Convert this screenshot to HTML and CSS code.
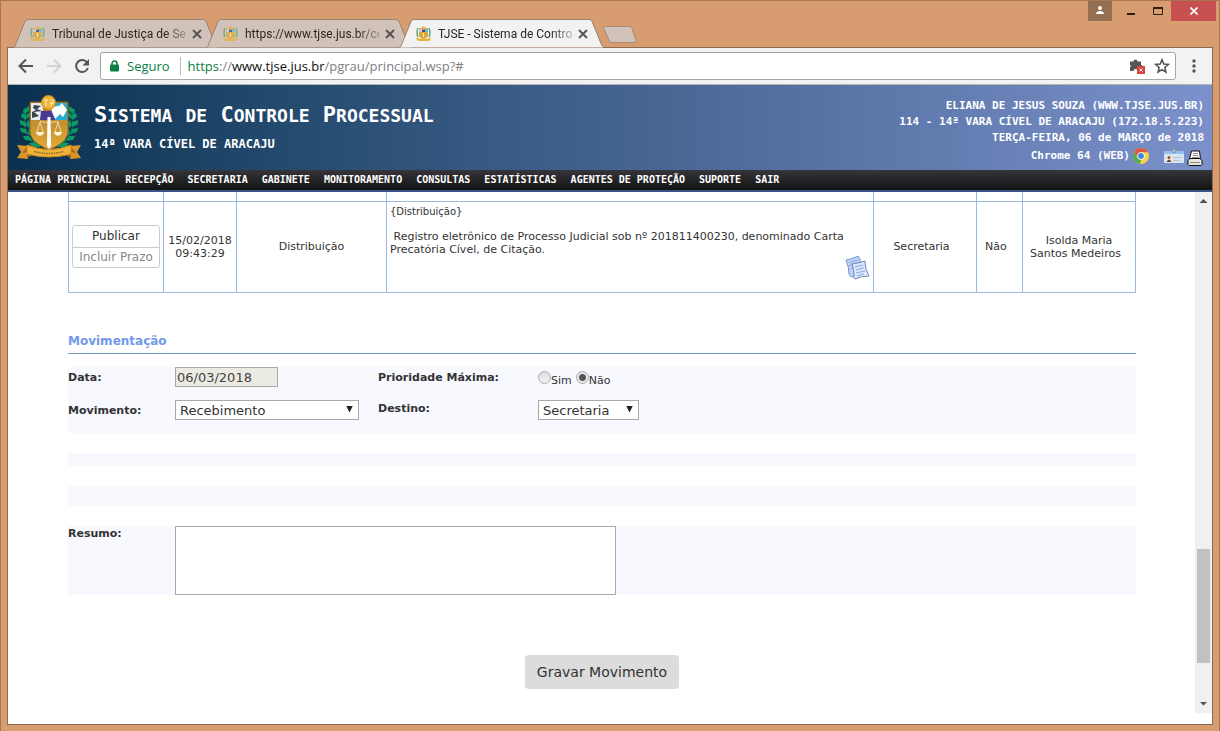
FILE: index.html
```html
<!DOCTYPE html>
<html lang="pt-BR">
<head>
<meta charset="utf-8">
<title>TJSE - Sistema de Controle Processual</title>
<link rel="stylesheet" href="styles.css">
</head>
<body>
<svg class="defs" aria-hidden="true">
  <defs>
    <linearGradient id="gold" x1="0" y1="0" x2="0" y2="1"><stop offset="0" stop-color="#a97b2c"/><stop offset="1" stop-color="#e3ad38"/></linearGradient>
    <symbol id="crest" viewBox="0 0 66 64">
      <g fill="none" stroke="#12694d"><path d="M13 12C4 28 9 44 24 53M52 12c9 16 4 32-11 41"/></g>
      <g fill="#0c9a63">
        <path d="M13 11l-6 4 1 4 5-3zM6 18l5 2-1 5-5-3zM14 17l-4 3 1 4 4-4zM4 25l6 2v5l-6-3zM12 25l-2 5 3 3 2-5zM4 33l6 1 2 5-7-2zM13 33l-1 6 4 3 1-6zM7 41l6 0 4 5-8-1zM17 40l0 6 5 3-1-6zM13 48l7-1 5 5-9 0z"/>
        <path d="M53 11l6 4-1 4-5-3zM60 18l-5 2 1 5 5-3zM52 17l4 3-1 4-4-4zM62 25l-6 2v5l6-3zM54 25l2 5-3 3-2-5zM62 33l-6 1-2 5 7-2zM53 33l1 6-4 3-1-6zM59 41l-6 0-4 5 8-1zM49 40l0 6-5 3 1-6zM53 48l-7-1-5 5 9 0z"/>
      </g>
      <path d="M14 7h38v29c0 9-8 14-19 19-11-5-19-10-19-19z" fill="url(#gold)" stroke="#8b6420"/>
      <path d="M15 8h12v17H15z" fill="#e8edf2"/>
      <path d="M18 10l7 1-4 3 5 2-8 1 5 4-7 2v-6l4-2-3-2z" fill="#3c424c"/>
      <path d="M25 16h15v9H24z" fill="#493b91"/>
      <path d="M39 8h12v17H39z" fill="#25acd8"/>
      <path d="M35 12l8-1 3-3 5 7-4 7-3-3-5 5-3-7z" fill="#fff"/>
      <circle cx="32.500" cy="7.500" r="7" fill="#efb43a" stroke="#c98a21"/>
      <path d="M28 5h4M30 5v6M34 5c5-1 5 3 1 3v3M34 8h4" stroke="#fff2ba" fill="none"/>
      <path d="M31.500 22h3l.500 29-2 3-2-3z" fill="#fff"/>
      <path d="M24 26c4 2 14 2 18 0M24 27l-3 10M24 27l3 10M42 27l-3 10M42 27l3 10" fill="none" stroke="#fff5d5" stroke-width=".7"/>
      <path d="M20 37h8c-1 5-7 5-8 0zM38 37h8c-1 5-7 5-8 0z" fill="#fff8df"/>
      <path d="M1 50l11 1v13L1 63l4-6zM65 50l-11 1v13l11-1-4-6z" fill="#d8952a"/>
      <path d="M11 52l-5 6 5-1v6l7-4z" fill="#a76520"/>
      <path d="M55 52l5 6-5-1v6l-7-4z" fill="#a76520"/>
      <path d="M11 50q22 9 44 0v9q-22 6-44 0z" fill="#f0b338" stroke="#cd8b23"/>
      <path d="M18 56.500q15 4 30 0" fill="none" stroke="#8a6425" stroke-width="1.500" stroke-dasharray="1.500 1"/>
    </symbol>
    <symbol id="favicon" viewBox="0 0 15 15">
      <path d="M2 2Q0 6 2 11M13 2q2 4 0 9" fill="none" stroke="#57a98a" stroke-width="1.500"/>
      <path d="M3 2h9v7q0 3-4.500 4Q3 12 3 9z" fill="#dda93a"/>
      <path d="M3.500 3h3v3h-3z" fill="#c9d2dc"/>
      <path d="M6 3.500h3V6H6z" fill="#4c4a86"/>
      <path d="M9 3h2.500v3H9z" fill="#5bbcdc"/>
      <circle cx="7.500" cy="2" r="1.800" fill="#e5b24b"/>
      <path d="M7 7h1v4H7z" fill="#fbeec5"/>
      <path d="M0 11.500q7.500 3 15 0l-1 3q-6.500 1-13 0z" fill="#e8b136"/>
    </symbol>
    <symbol id="cross" viewBox="0 0 10 10"><path d="M1 1l8 8M9 1L1 9" stroke="currentColor" stroke-width="2"/></symbol>
    <symbol id="tab-shape" viewBox="0 0 205 29" preserveAspectRatio="none"><path d="M0 28.500c2 0 2-2 3-4L12 2.500Q13 .500 15 .500H190Q192 .500 193 2.500L202 24.500C203 27 204 28.500 205 28.500" fill="currentColor" stroke="#99826f"/></symbol>
  </defs>
</svg>

<div class="window">
  <header class="titlebar">
    <div class="tabs">
      <div class="tab">
        <svg class="tab-bg"><use href="#tab-shape"/></svg>
        <svg class="favicon"><use href="#favicon"/></svg>
        <span class="tab-title">Tribunal de Justiça de Se</span>
        <button class="tab-close" aria-label="Fechar guia"><svg><use href="#cross"/></svg></button>
      </div>
      <div class="tab">
        <svg class="tab-bg"><use href="#tab-shape"/></svg>
        <svg class="favicon"><use href="#favicon"/></svg>
        <span class="tab-title">https://www.tjse.jus.br/cc</span>
        <button class="tab-close" aria-label="Fechar guia"><svg><use href="#cross"/></svg></button>
      </div>
      <div class="tab active">
        <svg class="tab-bg"><use href="#tab-shape"/></svg>
        <svg class="favicon"><use href="#favicon"/></svg>
        <span class="tab-title">TJSE - Sistema de Contro</span>
        <button class="tab-close" aria-label="Fechar guia"><svg><use href="#cross"/></svg></button>
      </div>
      <button class="new-tab" aria-label="Nova guia"><svg viewBox="0 0 34 18"><path d="M2.500.500H26Q28 .500 29 2.500L33 14.500Q33.500 16.500 31 16.500H9Q7 16.500 6 14.500L1 2.500Q.500.500 2.500.500z" fill="#d1c3b9" stroke="#a58973"/></svg></button>
    </div>
    <div class="window-controls">
      <button class="profile" aria-label="Perfil"><svg width="24" height="20"><circle cx="12" cy="7" r="2" fill="#fff"/><path d="M8 13c0-4 8-4 8 0z" fill="#fff"/></svg></button>
      <button class="minimize" aria-label="Minimizar"><svg width="24" height="20"><path d="M4 13h8" stroke="#2d1d12" stroke-width="2"/></svg></button>
      <button class="maximize" aria-label="Maximizar"><svg width="24" height="20"><path d="M6.500 7h9v6.500h-9z" fill="none" stroke="#2d1d12"/><path d="M6 7h10" stroke="#2d1d12" stroke-width="2"/></svg></button>
      <button class="close" aria-label="Fechar"><svg width="8" height="8"><path d="M.500.500l7 7M7.500.500l-7 7" stroke="#fff" stroke-width="1.700"/></svg></button>
    </div>
  </header>

  <div class="browser">
    <div class="toolbar">
      <button aria-label="Voltar"><svg viewBox="0 0 16 16"><path d="M15 8H2M8 1.500L1.500 8 8 14.500" fill="none" stroke="#555" stroke-width="2"/></svg></button>
      <button aria-label="Avançar"><svg viewBox="0 0 16 16"><path d="M1 8h13M8 1.500L14.500 8 8 14.500" fill="none" stroke="#d2d2d2" stroke-width="2"/></svg></button>
      <button aria-label="Recarregar"><svg viewBox="0 0 16 16"><path d="M13 4.500A6 6 0 1 0 13.800 10" fill="none" stroke="#555" stroke-width="2"/><path d="M15 1v6.500H8.500z" fill="#555"/></svg></button>
      <div class="omnibox">
        <svg class="lock" viewBox="0 0 9 12"><path d="M2 5V3.500a2.500 2.500 0 0 1 5 0V5" fill="none" stroke="#0b8043" stroke-width="1.500"/><rect y="4.500" width="9" height="7" rx="1" fill="#0b8043"/></svg>
        <span class="secure">Seguro</span>
        <span class="url"><span class="scheme">https</span>://<b>www.tjse.jus.br</b>/pgrau/principal.wsp?#</span>
        <svg class="ext" viewBox="0 0 16 16"><path d="M1 3.500h3.500a2 2 0 1 1 4 0H12V7a2 2 0 1 1 0 4v2H8.500a2 2 0 0 0-4 0H1V9.500a2 2 0 0 0 0-3z" fill="#555"/><path d="M8 8h8v8H8z" fill="#d9453c"/><path d="M10.500 10.500l3 3M13.500 10.500l-3 3" stroke="#fff"/></svg>
        <svg class="star" viewBox="0 0 16 16"><path d="M8 1.800l1.800 4.300 4.500.400-3.400 3 1 4.500L8 11.600 4.100 14l1-4.500-3.400-3 4.500-.400z" fill="none" stroke="#555" stroke-width="1.600"/></svg>
      </div>
      <button class="menu" aria-label="Menu"><svg viewBox="0 0 4 14"><g fill="#555"><circle cx="2" cy="2" r="1.700"/><circle cx="2" cy="7" r="1.700"/><circle cx="2" cy="12" r="1.700"/></g></svg></button>
    </div>

    <div class="page">
      <div class="banner">
        <svg class="logo"><use href="#crest"/></svg>
        <div class="heading">
          <h1><span>S</span>ISTEMA<span> </span>DE<span> C</span>ONTROLE<span> P</span>ROCESSUAL</h1>
          <p>14ª VARA CÍVEL DE ARACAJU</p>
        </div>
        <div class="session">
          <p>ELIANA DE JESUS SOUZA (WWW.TJSE.JUS.BR)</p>
          <p>114 - 14ª VARA CÍVEL DE ARACAJU (172.18.5.223)</p>
          <p>TERÇA-FEIRA, 06 de MARÇO de 2018</p>
          <div class="client">
            <span>Chrome 64 (WEB)</span>
            <svg class="chrome" viewBox="0 0 16 16"><circle cx="8" cy="8" r="8" fill="#fbd04b"/><path d="M1 4.100A8 8 0 0 1 15 4.200H8L5 10z" fill="#df5548"/><path d="M1 4.100l3.700 6L8 12l-1 4A8 8 0 0 1 1 4.100z" fill="#55aa57"/><circle cx="8" cy="8" r="3.800" fill="#fff"/><circle cx="8" cy="8" r="2.900" fill="#3589dc"/></svg>
            <svg class="card" viewBox="0 0 20 16"><rect y="3" width="20" height="12" rx="1" fill="#d7e5f2"/><path d="M0 3h20v3H0z" fill="#8fc0ee"/><path d="M8.500 1.500h3v3h-3z" fill="#b6c1ca" stroke="#8797a3"/><path d="M2 8h6v6H2z" fill="#f0e9df"/><circle cx="5" cy="9.500" r="1.500" fill="#9b512b"/><path d="M2.500 14q2.500-5 5 0z" fill="#5b4540"/><path d="M9 9.500h9M9 12.500h7" stroke="#b9c4ce"/></svg>
            <svg class="printer" viewBox="0 0 16 16"><path d="M4.500 1h8l1 8h-11z" fill="#fff" stroke="#111"/><path d="M6 3.500h5M6 5.500h5M5 7.500h7" stroke="#888"/><path d="M3 8.500h10l2 2v4l-1 1H2l-1-1v-4z" fill="#e8e6dc" stroke="#111"/><path d="M3 12.500h10" stroke="#888"/></svg>
          </div>
        </div>
      </div>
      <nav class="nav">
        <a href="#">PÁGINA PRINCIPAL</a><a href="#">RECEPÇÃO</a><a href="#">SECRETARIA</a><a href="#">GABINETE</a><a href="#">MONITORAMENTO</a><a href="#">CONSULTAS</a><a href="#">ESTATÍSTICAS</a><a href="#">AGENTES DE PROTEÇÃO</a><a href="#">SUPORTE</a><a href="#">SAIR</a>
      </nav>

      <div class="viewport">
        <main class="content">
          <table class="moves">
            <colgroup><col class="c-act"><col class="c-date"><col class="c-type"><col><col class="c-dest"><col class="c-flag"><col class="c-user"></colgroup>
            <tbody>
              <tr class="stub"><td></td><td></td><td></td><td></td><td></td><td></td><td></td></tr>
              <tr>
                <td><div class="actions"><button>Publicar</button><button disabled>Incluir Prazo</button></div></td>
                <td>15/02/2018<br>09:43:29</td>
                <td>Distribuição</td>
                <td class="detail">
                  <p class="tag">{Distribuição}</p>
                  <p class="body">&nbsp;Registro eletrônico de Processo Judicial sob nº 201811400230, denominado Carta<br>Precatória Cível, de Citação.</p>
                  <svg class="docs" viewBox="0 0 26 26"><path d="M2 5q6-1 12-4l2 3q0 8 3 15-7-2-11 3-1 1-3-3 0-7-3-14z" fill="#bed2f5" stroke="#7a96d2"/><path d="M5 8l8-3M5 11l8-3M6 14l5-2" stroke="#8ca8df"/><path d="M8 9q7-1 13-3 0 9 4 15-8 0-14 3-2-1-1-4 0-6-2-11z" fill="#dce9fc" stroke="#7088b8"/><path d="M11 12l8-2M12 15l8-2M12 18l9-2M13 21l7-2" stroke="#89a8dd"/></svg>
                </td>
                <td>Secretaria&nbsp;&nbsp;</td>
                <td class="flag">Não</td>
                <td>Isolda Maria<br>Santos Medeiros&nbsp;&nbsp;</td>
              </tr>
            </tbody>
          </table>

          <h2>Movimentação</h2>
          <form class="form">
            <div class="row">
              <label for="data">Data:</label>
              <div><input id="data" class="date" type="text" value="06/03/2018" readonly></div>
              <span class="label" id="prio">Prioridade Máxima:</span>
              <div class="radios" role="radiogroup" aria-labelledby="prio">
                <label><input type="radio" name="prioridade">Sim</label>
                <label><input type="radio" name="prioridade" checked>Não</label>
              </div>
            </div>
            <div class="row second">
              <label for="movimento">Movimento:</label>
              <div class="select wide"><select id="movimento"><option>Recebimento</option></select></div>
              <label for="destino">Destino:</label>
              <div class="select narrow"><select id="destino"><option>Secretaria</option></select></div>
            </div>
            <div class="band short"></div>
            <div class="band"></div>
            <div class="row summary">
              <label for="resumo">Resumo:</label>
              <textarea id="resumo"></textarea>
            </div>
            <button class="save" type="button">Gravar Movimento</button>
          </form>
        </main>
        <div class="scrollbar">
          <i class="arrow up"></i>
          <i class="thumb"></i>
          <i class="arrow down"></i>
        </div>
      </div>
    </div>
  </div>
</div>
</body>
</html>
```
FILE: styles.css
```css
* { box-sizing: border-box; }
body { margin: 0; font: 11px/13px Verdana, "DejaVu Sans", sans-serif; color: #333; }
h1, h2, p { margin: 0; }
svg { display: block; }
button { padding: 0; border: 0; background: none; font: inherit; color: inherit; }
.defs { position: absolute; width: 0; height: 0; }

.window { min-height: 100vh; display: flex; flex-direction: column; padding: 0 6px 6px; background: #d79d70; border: 1px solid #a9774f; }

/* Title bar and tabs */
.titlebar { display: flex; justify-content: space-between; height: 46px; margin-right: -3px; }
.tabs { display: flex; align-items: flex-end; padding-left: 6px; margin-bottom: -1px; }
.tab { position: relative; display: flex; align-items: center; width: 205px; height: 29px; padding: 0 16px 0 17px; margin-right: -12px; color: #d1c3b9; }
.tab.active { color: #f2f2f2; z-index: 1; }
.tab-bg { position: absolute; inset: 0; width: 100%; height: 100%; }
.favicon { position: relative; width: 15px; height: 15px; flex: none; opacity: .8; }
.active .favicon { opacity: 1; }
.tab-title { position: relative; flex: 1; min-width: 0; margin: 0 6px 0 7px; white-space: nowrap; font: 12px/16px Roboto, sans-serif; color: #2c2623; -webkit-mask-image: linear-gradient(90deg, #000 84%, transparent 106%); mask-image: linear-gradient(90deg, #000 84%, transparent 106%); }
.tab-close { position: relative; color: #555; }
.tab-close svg { width: 10px; height: 10px; }
.new-tab { align-self: flex-end; margin: 0 0 4px 11px; }
.new-tab svg { width: 34px; height: 18px; }
.window-controls { display: flex; align-items: flex-start; }
.window-controls button { height: 20px; }
.profile { background: #946f51; }
.minimize { margin-left: 11px; }
.window-controls .close { display: grid; place-items: center; width: 45px; background: #c75050; }

.browser { flex: 1; display: flex; flex-direction: column; background: #fff; border: 1px solid #8d6b50; }

/* Toolbar */
.toolbar { display: flex; align-items: center; gap: 12px; height: 37px; padding: 0 10px; background: #f2f2f2; border-bottom: 1px solid #b4b4b4; }
.toolbar button svg { width: 16px; height: 16px; }
.toolbar .menu svg { width: 4px; height: 14px; }
.toolbar .menu { padding: 0 6px 0 4px; }
.omnibox { flex: 1; display: flex; align-items: center; height: 28px; margin-left: -2px; padding: 0 5px 0 9px; background: #fff; border: 1px solid #a6a6a6; border-radius: 3px; font: 13px/18px "Open Sans", sans-serif; }
.lock { width: 9px; height: 12px; margin-right: 8px; }
.secure { padding-right: 10px; border-right: 1px solid #bbb; color: #0b8043; }
.url { flex: 1; padding-left: 7px; color: #808080; }
.url b { font-weight: 400; color: #111; }
.scheme { color: #0b8043; }
.ext { width: 16px; height: 16px; margin-right: 9px; }
.star { width: 16px; height: 16px; }

/* Application banner */
.page { flex: 1; display: flex; flex-direction: column; }
.banner { display: flex; height: 85px; padding: 10px 8px 0; background: linear-gradient(90deg, #0a304f, #244a6e 23%, #4a6896 56%, #7c91cb); color: #fff; font-family: Consolas, "DejaVu Sans Mono", monospace; font-weight: 700; }
.logo { width: 66px; height: 64px; }
.heading { flex: 1; margin-left: 12px; }
.heading h1 { font-size: 18px; line-height: 24px; padding-top: 8px; white-space: pre; }
.heading h1 span { font-size: 22px; }
.heading p { font-size: 12px; line-height: 16px; margin-top: 8px; }
.session { font-size: 11px; line-height: 16px; text-align: right; padding-top: 3px; }
.client { display: flex; justify-content: flex-end; align-items: center; height: 20px; }
.chrome { width: 16px; height: 16px; margin-left: 3px; }
.card { width: 20px; height: 16px; margin-left: 15px; }
.printer { width: 16px; height: 16px; margin: 3px 1px 0 3px; }
.nav { display: flex; gap: 14px; height: 22px; padding: 0 7px; background: linear-gradient(#35353b, #131313); border-bottom: 2px solid #3c5289; font: 700 10px/20px Consolas, "DejaVu Sans Mono", monospace; }
.nav a { color: #fff; text-decoration: none; }

/* Scrolled page area */
.viewport { flex: 1; display: flex; padding-bottom: 11px; }
.content { flex: 1; padding: 0 59px 24px 60px; }
.moves { width: 100%; border-collapse: collapse; table-layout: fixed; }
.moves td { border: 1px solid #9abbdf; padding: 0 3px; text-align: center; height: 91px; }
.moves .stub td { border-top: 0; height: 9px; }
.c-act { width: 95px; }
.c-date { width: 73px; }
.c-type { width: 150px; }
.c-dest { width: 103px; }
.c-flag { width: 46px; }
.c-user { width: 113px; }
.moves td.detail { text-align: left; vertical-align: top; }
.moves td.flag { text-align: left; padding-left: 8px; }
.tag { margin: 3px 0 12px; font-size: 10px; }
.docs { width: 26px; height: 26px; margin: -1px 0 0 auto; }
.actions { display: flex; flex-direction: column; border: 1px solid #ccc; border-radius: 3px; overflow: hidden; font-size: 12px; }
.actions button { height: 21px; }
.actions button + button { height: 20px; border-top: 1px solid #ccc; color: #888; }

h2 { margin-top: 41px; padding-bottom: 5px; border-bottom: 1px solid #6f9dc4; font-size: 12px; line-height: 14px; color: #7098ec; }
.form { margin-top: 13px; }
.row { display: grid; grid-template-columns: 107px 203px 160px 1fr; height: 33px; background: #f8f9ff; font-size: 11px; }
.row > label, .row > .label { font-weight: 700; line-height: 22px; }
.row.second label[for="destino"] { line-height: 18px; }
.date { display: block; width: 103px; height: 20px; padding: 1px 1px 0; border: 1px solid #a9a9a9; background: #ebebe4; color: #444; font: 13px/18px Verdana, "DejaVu Sans", sans-serif; }
.radios { display: flex; gap: 4px; padding-top: 3px; }
.radios label { display: flex; line-height: 22px; }
.radios input { appearance: none; width: 13px; height: 13px; margin: 1px 0 0; border: 1px solid #aaa; border-radius: 50%; background: linear-gradient(#dedede, #f3f3f3); }
.radios input:checked { background: radial-gradient(circle, #555 3px, #e8e8e8 4px); }
.select { position: relative; height: 20px; }
.wide { width: 184px; }
.narrow { width: 101px; }
.select select { appearance: none; width: 100%; height: 20px; padding: 1px 4px 0; border: 1px solid #a9a9a9; border-radius: 0; background: #fff; color: #333; font: 13px/18px Verdana, "DejaVu Sans", sans-serif; }
.select::after { content: ""; position: absolute; right: 6px; top: 6px; width: 7px; height: 7px; background: #222; clip-path: polygon(0 0, 100% 0, 50% 100%); }
.band { height: 20px; margin-top: 20px; background: #f8f9ff; }
.band.short { height: 13px; }
.row.summary { grid-template-columns: 107px 441px 1fr; height: 69px; margin-top: 20px; }
.row.summary label { line-height: 16px; }
.summary textarea { display: block; width: 100%; height: 69px; border: 1px solid #a9a9a9; background: #fff; resize: none; }
.save { display: block; height: 34px; margin: 60px auto 0; padding: 1px 12px 0; border-radius: 4px; background: #dcdcdc; color: #333; font-size: 14px; }

.scrollbar { display: flex; flex-direction: column; align-items: center; width: 17px; background: #f0f0f0; }
.arrow { width: 8px; height: 4px; background: #505050; }
.up { margin-top: 7px; clip-path: polygon(50% 0, 100% 100%, 0 100%); }
.down { margin-bottom: 7px; clip-path: polygon(0 0, 100% 0, 50% 100%); }
.thumb { width: 13px; height: 114px; margin: auto 0 39px; background: #c1c1c1; }
```
